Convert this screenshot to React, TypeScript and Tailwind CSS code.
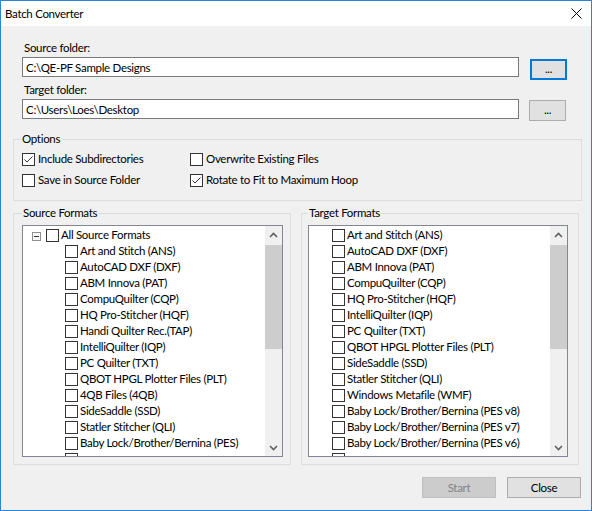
const sourceFormats = [
	'Art and Stitch (ANS)',
	'AutoCAD DXF (DXF)',
	'ABM Innova (PAT)',
	'CompuQuilter (CQP)',
	'HQ Pro-Stitcher (HQF)',
	'Handi Quilter Rec.(TAP)',
	'IntelliQuilter (IQP)',
	'PC Quilter (TXT)',
	'QBOT HPGL Plotter Files (PLT)',
	'4QB Files (4QB)',
	'SideSaddle (SSD)',
	'Statler Stitcher (QLI)',
	'Baby Lock/Brother/Bernina (PES)',
];

const targetFormats = [
	'Art and Stitch (ANS)',
	'AutoCAD DXF (DXF)',
	'ABM Innova (PAT)',
	'CompuQuilter (CQP)',
	'HQ Pro-Stitcher (HQF)',
	'IntelliQuilter (IQP)',
	'PC Quilter (TXT)',
	'QBOT HPGL Plotter Files (PLT)',
	'SideSaddle (SSD)',
	'Statler Stitcher (QLI)',
	'Windows Metafile (WMF)',
	'Baby Lock/Brother/Bernina (PES v8)',
	'Baby Lock/Brother/Bernina (PES v7)',
	'Baby Lock/Brother/Bernina (PES v6)',
];

function CheckBox({ checked = false }: { checked?: boolean }) {
	return (
		<span className="mt-[2px] flex h-[13px] w-[13px] shrink-0 items-center justify-center border border-[#333333] bg-white">
			{checked && (
				<svg width="11" height="11" viewBox="0 0 11 11" fill="none">
					<path d="M1.5 5.5L4 8L9.5 2.5" stroke="#333333" strokeWidth="1" />
				</svg>
			)}
		</span>
	);
}

function Option({ label, checked }: { label: string; checked?: boolean }) {
	return (
		<div className="flex h-4 items-start gap-[3px] whitespace-nowrap">
			<CheckBox checked={checked} />
			<span className="leading-4">{label}</span>
		</div>
	);
}

function Chevron({ down = false }: { down?: boolean }) {
	return (
		<svg width="9" height="6" viewBox="0 0 9 6" fill="none">
			<path d={down ? 'M1 1L4.5 4.5L8 1' : 'M1 5L4.5 1.5L8 5'} stroke="#606060" strokeWidth="1.6" />
		</svg>
	);
}

function ScrollBar() {
	return (
		<div className="flex h-full w-[17px] shrink-0 flex-col bg-[#f0f0f0]">
			<div className="flex h-[17px] items-center justify-center">
				<Chevron />
			</div>
			<div className="mt-[2px] h-[104px] bg-[#cdcdcd]" />
			<div className="flex-1" />
			<div className="flex h-[17px] items-center justify-center">
				<Chevron down />
			</div>
		</div>
	);
}

function Row({ label, indent }: { label?: string; indent: string }) {
	return (
		<div className={`flex h-4 items-start whitespace-nowrap ${indent}`}>
			<CheckBox />
			{label && <span className="ml-[2px] leading-4">{label}</span>}
		</div>
	);
}

function GroupBox({ title, className, children }: { title: string; className: string; children: React.ReactNode }) {
	return (
		<fieldset className={`border border-[#dcdcdc] ${className}`}>
			<legend className="px-[1px] leading-4">{title}</legend>
			{children}
		</fieldset>
	);
}

export default function App() {
	return (
		<div className="flex h-[511px] w-[592px] flex-col border border-[#2a85d8] bg-[#f0f0f0] text-[11.5px] tracking-[-0.3px] text-black [font-family:Lato,'Noto_Sans',sans-serif]">
			{/* title bar */}
			<div className="flex h-[25px] shrink-0 items-center justify-between bg-white pl-[4px] pr-[9px]">
				<span className="pt-[1px] leading-4">Batch Converter</span>
				<svg width="11" height="11" viewBox="0 0 11 11" fill="none">
					<path d="M0.5 0.5L10.5 10.5M10.5 0.5L0.5 10.5" stroke="#000" strokeWidth="1" />
				</svg>
			</div>

			<div className="flex flex-1 flex-col pl-[11px] pr-[10px] pt-[14px]">
				<div className="pl-[12px] leading-4">Source folder:</div>
				<div className="mt-[1px] flex h-[20px] items-start pl-[10px]">
					<input
						readOnly
						value="C:\QE-PF Sample Designs"
						className="h-[20px] w-[497px] border border-[#7a7a7a] bg-white px-[3px] pt-[1px] outline-none"
					/>
					<button className="ml-[11px] mt-[2px] h-[21px] w-[37px] border-2 border-[#0078d7] bg-[#e1e1e1] pb-[2px] leading-3">
						...
					</button>
				</div>

				<div className="mt-[5px] pl-[12px] leading-4">Target folder:</div>
				<div className="mt-[1px] flex h-[20px] items-start pl-[10px]">
					<input
						readOnly
						value="C:\Users\Loes\Desktop"
						className="h-[20px] w-[497px] border border-[#7a7a7a] bg-white px-[3px] pt-[1px] outline-none"
					/>
					<button className="ml-[10px] mt-[1px] h-[21px] w-[37px] border border-[#adadad] bg-[#e1e1e1] pb-[2px] leading-3">
						...
					</button>
				</div>

				<GroupBox title="Options" className="ml-[1px] mt-[12px] w-[569px] pb-[12px] pl-[7px] pt-[4px]">
					<div className="grid grid-cols-[168px_1fr] gap-y-[5px] pl-[1px]">
						<Option label="Include Subdirectories" checked />
						<Option label="Overwrite Existing Files" />
						<Option label="Save in Source Folder" />
						<Option label="Rotate to Fit to Maximum Hoop" checked />
					</div>
				</GroupBox>

				<div className="ml-[1px] mt-[4px] flex gap-[10px]">
					<GroupBox title="Source Formats" className="w-[278px] pb-[7px] pl-[8px] pr-[7px] pt-[4px]">
						<div className="flex h-[232px] w-[261px] border border-[#828790] bg-white">
							<div className="flex-1 overflow-hidden pt-[1px]">
								<div className="flex h-4 items-start whitespace-nowrap pl-[9px]">
									<span className="mt-[5px] flex h-[9px] w-[9px] items-center justify-center border border-[#8f8f8f] bg-[#f7f7f7]">
										<span className="h-[1px] w-[5px] bg-[#333333]" />
									</span>
									<span className="ml-[5px]">
										<CheckBox />
									</span>
									<span className="ml-[2px] leading-4">All Source Formats</span>
								</div>
								{sourceFormats.map((f) => (
									<Row key={f} label={f} indent="pl-[42px]" />
								))}
								<Row indent="pl-[42px]" />
							</div>
							<ScrollBar />
						</div>
					</GroupBox>

					<GroupBox title="Target Formats" className="w-[278px] pb-[7px] pl-[6px] pr-[10px] pt-[4px]">
						<div className="flex h-[232px] w-[260px] border border-[#828790] bg-white">
							<div className="flex-1 overflow-hidden pt-[1px]">
								{targetFormats.map((f) => (
									<Row key={f} label={f} indent="pl-[23px]" />
								))}
								<Row indent="pl-[23px]" />
							</div>
							<ScrollBar />
						</div>
					</GroupBox>
				</div>

				<div className="mt-[12px] flex justify-end gap-[11px]">
					<button className="h-[21px] w-[74px] border border-[#bfbfbf] bg-[#cccccc] text-[#838383]">Start</button>
					<button className="h-[21px] w-[74px] border border-[#adadad] bg-[#e1e1e1]">Close</button>
				</div>
			</div>
		</div>
	);
}
